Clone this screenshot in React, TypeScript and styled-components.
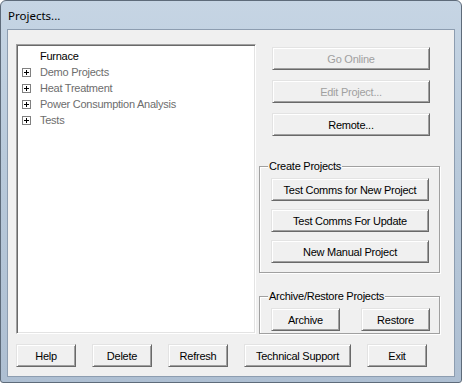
import React from 'react';
import styled, { createGlobalStyle } from 'styled-components';

const GlobalStyle = createGlobalStyle`
  html, body {
    margin: 0;
    padding: 0;
    overflow: hidden;
    background: #ffffff;
  }
  * {
    box-sizing: border-box;
  }
`;

const Window = styled.div`
  width: 462px;
  height: 383px;
  border: 1px solid #5e6b7a;
  border-radius: 6px 6px 3px 3px;
  background: linear-gradient(180deg, #c6d5e4 0%, #b9cadb 40%, #aebfd2 100%);
  display: flex;
  flex-direction: column;
  padding: 0 6px 5px 6px;
  font-family: "Liberation Sans", Arial, sans-serif;
`;

const TitleBar = styled.div`
  height: 28px;
  display: flex;
  align-items: center;
  padding: 0 0 0 1px;
  font-family: "Noto Sans", "Liberation Sans", sans-serif;
  font-size: 11.5px;
  color: #000;
`;

const Client = styled.div`
  flex: 1;
  border: 1px solid #8d9db0;
  background: #f0f0f0;
  display: flex;
  flex-direction: column;
  font-size: 11px;
  letter-spacing: -0.25px;
  color: #000;
`;

const Top = styled.div`
  display: flex;
  padding: 14px 0 0 8px;
  gap: 3px;
`;

const Tree = styled.div`
  width: 240px;
  height: 290px;
  background: #fff;
  border: 1px solid;
  border-color: #a0a0a0 #fff #fff #a0a0a0;
  box-shadow: inset 1px 1px #696969, inset -1px -1px #e3e3e3;
  padding: 3px 0 0 5px;
`;

const TreeRow = styled.div<{ $dim?: boolean }>`
  height: 16px;
  display: flex;
  align-items: center;
  color: ${p => (p.$dim ? '#6d6d6d' : '#000')};
`;

const Expander = styled.span`
  width: 9px;
  height: 9px;
  display: inline-flex;
  margin-right: 9px;
`;

const Spacer = styled.span`
  width: 18px;
`;

const RightCol = styled.div`
  width: 181px;
  display: flex;
  flex-direction: column;
  padding-top: 3px;
`;

const Button = styled.button<{ $w?: number }>`
  width: ${p => (p.$w ? `${p.$w}px` : '158px')};
  height: 23px;
  padding: 0;
  background: #f0f0f0;
  border: 1px solid;
  border-color: #e3e3e3 #696969 #696969 #e3e3e3;
  box-shadow: inset 1px 1px #fff, inset -1px -1px #a0a0a0;
  font-family: "Liberation Sans", Arial, sans-serif;
  font-size: 11px;
  letter-spacing: -0.25px;
  color: #000;
  &:disabled {
    color: #a0a0a0;
  }
`;

const ActionStack = styled.div`
  display: flex;
  flex-direction: column;
  gap: 10px;
  padding-left: 13px;
`;

const Group = styled.fieldset<{ $top: number; $h: number }>`
  margin: ${p => p.$top}px 0 0 0;
  height: ${p => p.$h}px;
  width: 181px;
  padding: 5px 0 0 11px;
  border: 1px solid #a0a0a0;
  box-shadow: inset 1px 1px #fff, 1px 1px #fff;
  display: flex;
  flex-direction: column;
  gap: 8px;
`;

const Legend = styled.legend`
  padding: 0 1px;
  margin-left: -3px;
  background: #f0f0f0;
  font-size: 11px;
  line-height: 13px;
`;

const Row = styled.div<{ $gap: number }>`
  display: flex;
  gap: ${p => p.$gap}px;
`;

const Footer = styled.div`
  display: flex;
  padding: 10px 0 0 8px;
  gap: 16px;
`;

const PlusBox = () => (
  <svg width="9" height="9" viewBox="0 0 9 9">
    <rect x="0.5" y="0.5" width="8" height="8" fill="#fff" stroke="#808080" />
    <path d="M2 4.5h5M4.5 2v5" stroke="#000" strokeWidth="1" />
  </svg>
);

const projects = ['Demo Projects', 'Heat Treatment', 'Power Consumption Analysis', 'Tests'];

export default function App() {
  return (
    <>
      <GlobalStyle />
      <Window>
        <TitleBar>Projects...</TitleBar>
        <Client>
          <Top>
            <Tree>
              <TreeRow>
                <Spacer />
                Furnace
              </TreeRow>
              {projects.map(name => (
                <TreeRow key={name} $dim>
                  <Expander>
                    <PlusBox />
                  </Expander>
                  {name}
                </TreeRow>
              ))}
            </Tree>
            <RightCol>
              <ActionStack>
                <Button disabled>Go Online</Button>
                <Button disabled>Edit Project...</Button>
                <Button>Remote...</Button>
              </ActionStack>
              <Group $top={24} $h={113}>
                <Legend>Create Projects</Legend>
                <Button>Test Comms for New Project</Button>
                <Button>Test Comms For Update</Button>
                <Button>New Manual Project</Button>
              </Group>
              <Group $top={17} $h={44}>
                <Legend>Archive/Restore Projects</Legend>
                <Row $gap={21}>
                  <Button $w={69}>Archive</Button>
                  <Button $w={69}>Restore</Button>
                </Row>
              </Group>
            </RightCol>
          </Top>
          <Footer>
            <Button $w={60}>Help</Button>
            <Button $w={60}>Delete</Button>
            <Button $w={60}>Refresh</Button>
            <Button $w={107}>Technical Support</Button>
            <Button $w={60}>Exit</Button>
          </Footer>
        </Client>
      </Window>
    </>
  );
}
